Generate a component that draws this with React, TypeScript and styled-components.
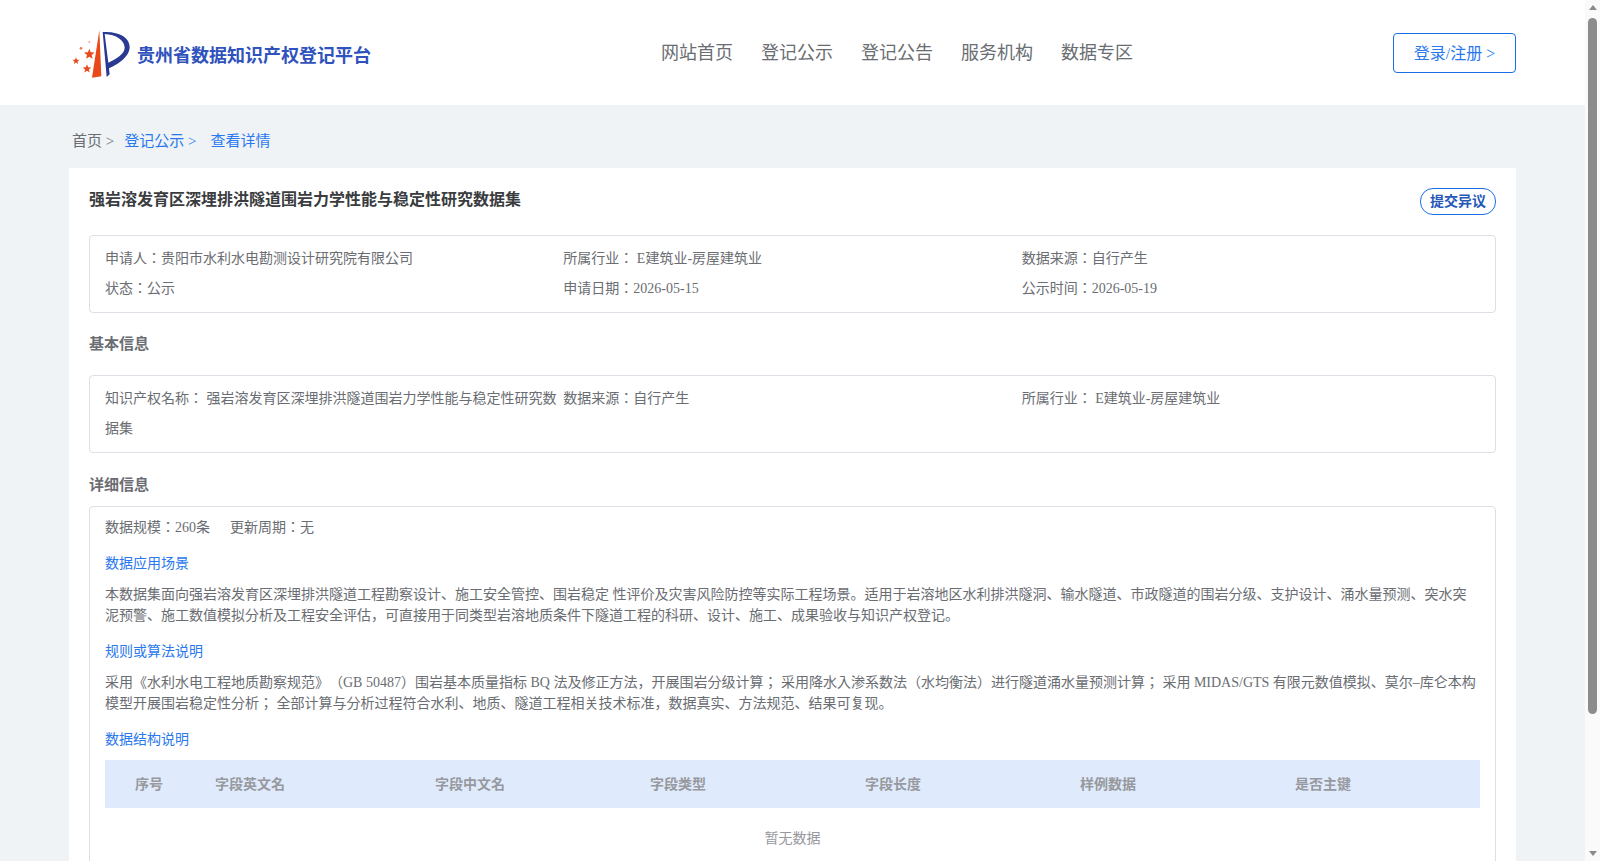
import React from "react";
import styled, { createGlobalStyle } from "styled-components";

const Global = createGlobalStyle`
  html, body { margin: 0; padding: 0; background: #eff3f6; height: 100%; overflow: hidden; }
  body { font-family: "Liberation Serif", "Noto Sans CJK JP", serif; font-size: 14px; color: #6a6d72; text-spacing-trim: space-all; }
  * { box-sizing: border-box; }
`;
const Shell = styled.div`display: flex; height: 861px; overflow: hidden;`;
const Page = styled.div`flex: 1; min-width: 0; overflow: hidden;`;
const Rail = styled.div`width: 15px; flex: none; background: #fafafa; display: flex; flex-direction: column; align-items: center; padding: 5px 0 5px;`;
const ArrowUp = styled.div`width: 0; height: 0; border-left: 4.5px solid transparent; border-right: 4.5px solid transparent; border-bottom: 5px solid #8a8a8a;`;
const ArrowDown = styled.div`margin-top: auto; width: 0; height: 0; border-left: 4.5px solid transparent; border-right: 4.5px solid transparent; border-top: 5px solid #8a8a8a;`;
const Thumb = styled.div`width: 9px; height: 696px; margin-top: 8px; background: #8c8c8c; border-radius: 5px;`;
const Header = styled.header`
  height: 105px; background: #fff; display: grid; grid-template-columns: 595px auto 1fr; align-items: center; padding: 0 69px 0 66px;
`;
const Brand = styled.div`display: flex; align-items: center; gap: 0;`;
const BrandName = styled.span`font-size: 18px; font-weight: 700; color: #2f52bd; margin-top: 3px; margin-left: -1px;`;
const Nav = styled.nav`display: flex; gap: 28px; margin-top: -3px;`;
const NavLink = styled.a`font-size: 18px; color: #6a6d72;`;
const Login = styled.button`
  justify-self: end; width: 123px; height: 40px; background: #fff; border: 1px solid #1a6fe8; border-radius: 4px;
  color: #2a78ee; font: inherit; font-size: 16px; padding: 0 0 2px;
`;
const Main = styled.main`padding: 0 69px; height: 920px;`;
const Crumbs = styled.div`height: 63px; display: flex; align-items: center; padding: 6px 0 0 3px; font-size: 15px; gap: 10px;`;
const Crumb = styled.span<{ $active?: boolean }>`color: ${p => (p.$active ? "#2a78ee" : "#6a6d72")}; margin-right: ${p => (p.$active ? "4px" : "0")};`;
const Card = styled.section`background: #fff; padding: 20px;`;
const TitleRow = styled.div`display: flex; justify-content: space-between; align-items: flex-start; min-height: 47px;`;
const Title = styled.h1`margin: 0; font-size: 16px; font-weight: 700; color: #3a3c40; line-height: 24px;`;
const Dissent = styled.button`
  width: 76px; height: 27px; border: 1px solid #1a6fe8; border-radius: 13px; background: #fff; color: #2558b8;
  font: inherit; font-size: 14px; font-weight: 700; padding: 0 0 3px;
`;
const Box = styled.div`border: 1px solid #dcdfe6; border-radius: 4px; padding: 8px 15px;`;
const Grid3 = styled.div`display: grid; grid-template-columns: repeat(3, 1fr); line-height: 30px;`;
const WrapCell = styled.div`padding-right: 5px;`;
const Section = styled.h2`margin: 0; font-size: 15px; font-weight: 700; color: #6a6d72; line-height: 20px; padding: 21px 0 21px;`;
const DetailSection = styled(Section)`padding: 22px 0 11px;`;
const DetailBox = styled.div`border: 1px solid #dcdfe6; border-radius: 4px; padding: 10px 15px 0; height: 520px;`;
const Meta = styled.div`display: flex; gap: 20px; line-height: 21px;`;
const SubHead = styled.div`color: #2a78ee; line-height: 21px; margin-top: 15px;`;
const Para = styled.p`margin: 10px 0 0; line-height: 21px;`;
const TableHead = styled.div`
  display: grid; grid-template-columns: 110px 220px repeat(4, 215px) 1fr; height: 48px; align-items: center; background: #dfebfc;
  margin-top: 10px; padding-bottom: 3px; font-weight: 700; color: #97999e;
`;
const FirstHead = styled.span`padding-left: 30px;`;
const Empty = styled.div`text-align: center; color: #97999e; height: 62px; line-height: 62px;`;
const Logo = () => (
  <svg width="72" height="60" viewBox="0 0 216 180">
    <path d="M100 22 L106 160 L78 164 Z" fill="#e8481a" />
    <path d="M110 27 C160 24 191 44 191 72 C191 102 155 124 129 136 L131 154 L122 162 Z M116 33 L127 119 C150 108 176 93 176 74 C176 52 150 34 116 33 Z" fill="#2a3a92" />
    <path d="M70 77 l4.2 11 11.8.6-9.2 7.4 3.1 11.4-9.9-6.5-9.9 6.5 3.1-11.4-9.2-7.4 11.8-.6Z" fill="#e8481a" />
    <path d="M30 103 l2.8 7.2 7.7.4-6 4.9 2 7.5-6.5-4.2-6.5 4.2 2-7.5-6-4.9 7.7-.4Z" fill="#e8481a" />
    <path d="M63 124 l3.4 8.8 9.5.5-7.4 6 2.5 9.1-8-5.2-8 5.2 2.5-9.1-7.4-6 9.5-.5Z" fill="#e8481a" />
    <circle cx="45" cy="76" r="4" fill="#ee7a4e" />
    <circle cx="70" cy="57" r="3" fill="#f2a488" />
  </svg>
);
const heads = ["字段英文名", "字段中文名", "字段类型", "字段长度", "样例数据", "是否主键"];
export default function App() {
  return (
    <Shell>
      <Global />
      <Page>
        <Header>
          <Brand><Logo /><BrandName>贵州省数据知识产权登记平台</BrandName></Brand>
          <Nav>{["网站首页", "登记公示", "登记公告", "服务机构", "数据专区"].map(n => <NavLink key={n}>{n}</NavLink>)}</Nav>
          <Login>登录/注册 &gt;</Login>
        </Header>
        <Main>
          <Crumbs><Crumb>首页 &gt;</Crumb><Crumb $active>登记公示 &gt;</Crumb><Crumb $active>查看详情</Crumb></Crumbs>
          <Card>
            <TitleRow><Title>强岩溶发育区深埋排洪隧道围岩力学性能与稳定性研究数据集</Title><Dissent>提交异议</Dissent></TitleRow>
            <Box>
              <Grid3>
                <div>申请人：贵阳市水利水电勘测设计研究院有限公司</div><div>所属行业： E建筑业-房屋建筑业</div><div>数据来源：自行产生</div>
                <div>状态：公示</div><div>申请日期：2026-05-15</div><div>公示时间：2026-05-19</div>
              </Grid3>
            </Box>
            <Section>基本信息</Section>
            <Box>
              <Grid3>
                <WrapCell>知识产权名称： 强岩溶发育区深埋排洪隧道围岩力学性能与稳定性研究数据集</WrapCell><div>数据来源：自行产生</div><div>所属行业： E建筑业-房屋建筑业</div>
              </Grid3>
            </Box>
            <DetailSection>详细信息</DetailSection>
            <DetailBox>
              <Meta><span>数据规模：260条</span><span>更新周期：无</span></Meta>
              <SubHead>数据应用场景</SubHead>
              <Para>本数据集面向强岩溶发育区深埋排洪隧道工程勘察设计、施工安全管控、围岩稳定 性评价及灾害风险防控等实际工程场景。适用于岩溶地区水利排洪隧洞、输水隧道、市政隧道的围岩分级、支护设计、涌水量预测、突水突泥预警、施工数值模拟分析及工程安全评估，可直接用于同类型岩溶地质条件下隧道工程的科研、设计、施工、成果验收与知识产权登记。</Para>
              <SubHead>规则或算法说明</SubHead>
              <Para>采用《水利水电工程地质勘察规范》（GB 50487）围岩基本质量指标 BQ 法及修正方法，开展围岩分级计算； 采用降水入渗系数法（水均衡法）进行隧道涌水量预测计算； 采用 MIDAS/GTS 有限元数值模拟、莫尔–库仑本构模型开展围岩稳定性分析； 全部计算与分析过程符合水利、地质、隧道工程相关技术标准，数据真实、方法规范、结果可复现。</Para>
              <SubHead>数据结构说明</SubHead>
              <TableHead><FirstHead>序号</FirstHead>{heads.map(h => <span key={h}>{h}</span>)}</TableHead>
              <Empty>暂无数据</Empty>
            </DetailBox>
          </Card>
        </Main>
      </Page>
      <Rail><ArrowUp /><Thumb /><ArrowDown /></Rail>
    </Shell>
  );
}
